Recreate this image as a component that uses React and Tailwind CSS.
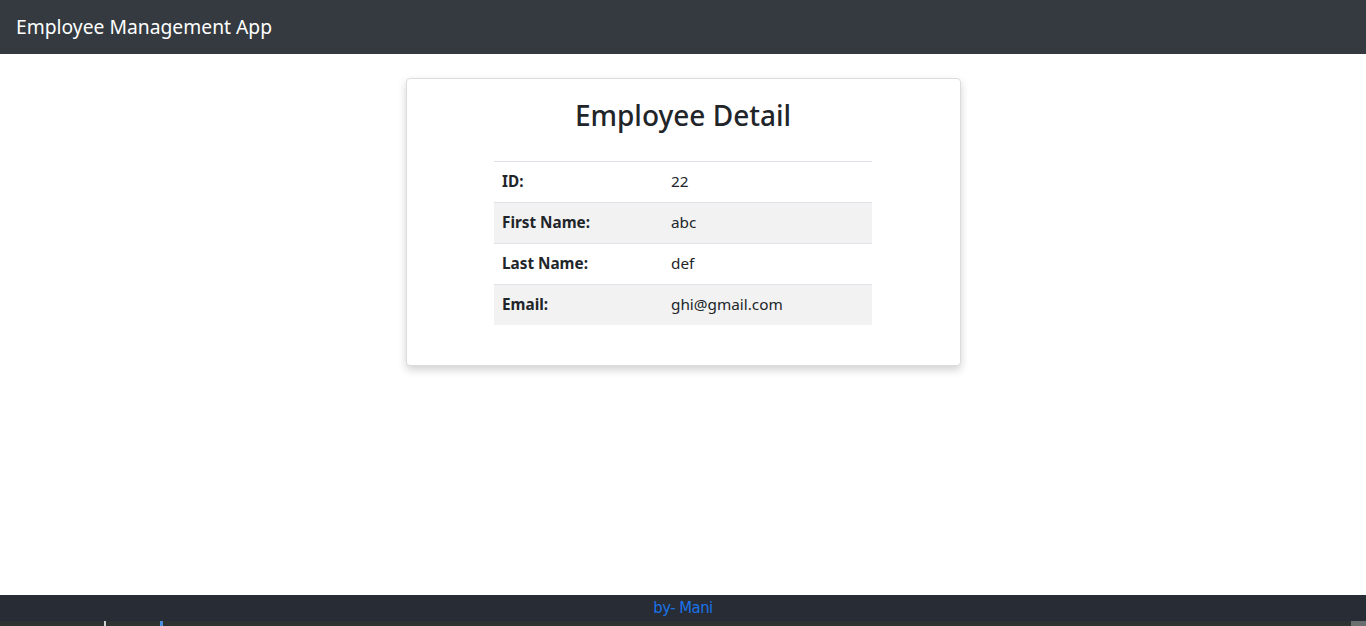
export default function App() {
  const rows = [
    ["ID:", "22"],
    ["First Name:", "abc"],
    ["Last Name:", "def"],
    ["Email:", "ghi@gmail.com"],
  ];
  return (
    <div className="flex h-[626px] flex-col bg-white text-[#212529]" style={{ fontFamily: '"Noto Sans", "Open Sans", sans-serif' }}>
      <nav className="flex h-[54px] shrink-0 items-center bg-[#343a40] px-4">
        <span className="text-[19.3px] text-white">Employee Management App</span>
      </nav>
      <main className="flex flex-1 justify-center pt-[24px]">
        <div className="h-[288px] w-[555px] rounded-[4px] border border-[#dcdcdc] bg-white px-[20px] pt-[20px] shadow-[0_4px_8px_rgba(0,0,0,0.18)]">
          <h3 className="mb-[28px] text-center text-[28px] leading-[1.2] font-medium">Employee Detail</h3>
          <table className="mx-auto w-[378px] border-collapse text-[15.3px]">
            <tbody>
              {rows.map(([k, v], i) => (
                <tr key={k} className={`h-[41px] border-t border-[#dee2e6] ${i % 2 === 1 ? "bg-[#f2f2f2]" : ""}`}>
                  <td className="w-[169px] px-2 pb-[1px] font-bold">{k}</td>
                  <td className="px-2 pb-[1px]">{v}</td>
                </tr>
              ))}
            </tbody>
          </table>
        </div>
      </main>
      <footer className="flex h-[26px] shrink-0 items-center justify-center bg-[#282c34]">
        <span className="text-[16.5px] tracking-[-0.5px] text-[#1a73e8]" style={{ fontFamily: '"DejaVu Sans Condensed", "DejaVu Sans", sans-serif' }}>by- Mani</span>
      </footer>
      <div className="flex h-[5px] shrink-0 items-end bg-[#2e3233]">
        <div className="ml-[104px] h-[5px] w-[2px] bg-[#cfd3cf]"></div>
        <div className="ml-[54px] h-[5px] w-[3px] bg-[#4a8fe0]"></div>
        <div className="ml-auto h-[5px] w-[15px] bg-[#6b6e6f]"></div>
      </div>
    </div>
  );
}
